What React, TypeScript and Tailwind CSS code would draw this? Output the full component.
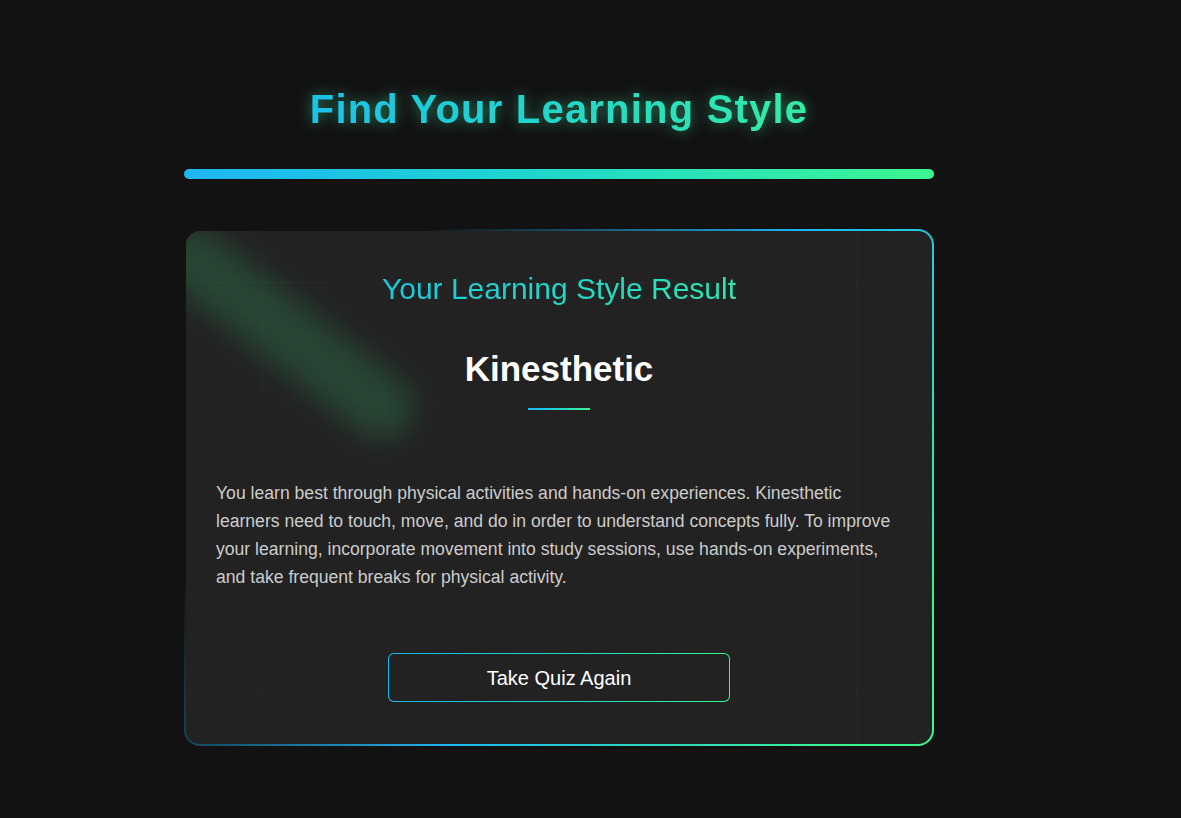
import React from "react";

const paragraph =
    "You learn best through physical activities and hands-on experiences. Kinesthetic learners need to touch, move, and do in order to understand concepts fully. To improve your learning, incorporate movement into study sessions, use hands-on experiments, and take frequent breaks for physical activity.";

export default function App() {
    return (
        <div className="min-h-screen bg-[#121212] font-['Liberation_Sans',Arial,sans-serif]">
            <div className="ml-[184px] w-[750px] pt-[85px] pb-[73px]">
                {/* Header */}
                <h1 className="text-center text-[40px] leading-[48px] font-bold tracking-[1.2px] bg-linear-to-r from-[#1fb5f5] to-[#3cf690] bg-clip-text text-transparent [filter:drop-shadow(0_0_7px_rgba(60,230,160,0.5))]">
                    Find Your Learning Style
                </h1>

                {/* Progress */}
                <div className="mt-9 h-[10px] rounded-full bg-linear-to-r from-[#1fb5f5] to-[#3cf690]" />

                {/* Result card */}
                <div className="mt-[50px] rounded-[16px] p-[2px] bg-[linear-gradient(125deg,transparent_22%,#1fb5f5_56%,#3cf690_92%)]">
                    <div className="relative overflow-hidden rounded-[14px] bg-[#222222] bg-[image:linear-gradient(rgba(255,255,255,0.022)_1px,transparent_1px),linear-gradient(90deg,rgba(255,255,255,0.022)_1px,transparent_1px)] bg-[size:595px_409px] bg-[position:75px_51px] px-[30px] pt-10 pb-[42px]">
                        {/* decorative glow */}
                        <div className="pointer-events-none absolute left-[-52px] top-[70px] h-[64px] w-[305px] rotate-[38deg] rounded-full bg-[#3cf690]/[0.16] blur-[14px]" />

                        <div className="relative flex flex-col items-center">
                            <h2 className="text-center text-[30px] leading-[36px] font-normal bg-linear-to-r from-[#1fb5f5] to-[#3cf690] bg-clip-text text-transparent w-[750px]">
                                Your Learning Style Result
                            </h2>

                            <div className="mt-[41px] text-center text-[35px] leading-[42px] font-bold text-white">
                                Kinesthetic
                            </div>
                            <div className="mt-[18px] h-[2px] w-[62px] bg-linear-to-r from-[#1fb5f5] to-[#3cf690]" />

                            <p className="mt-[69px] text-[17.6px] leading-7 text-[#cccccc]">{paragraph}</p>

                            <button className="mt-[62px] rounded-[6px] p-px bg-linear-to-r from-[#1fb5f5] to-[#3cf690]">
                                <span className="flex h-[47px] w-[340px] items-center justify-center rounded-[5px] bg-[#222222] text-[20px] text-white">
                                    Take Quiz Again
                                </span>
                            </button>
                        </div>
                    </div>
                </div>
            </div>
        </div>
    );
}
